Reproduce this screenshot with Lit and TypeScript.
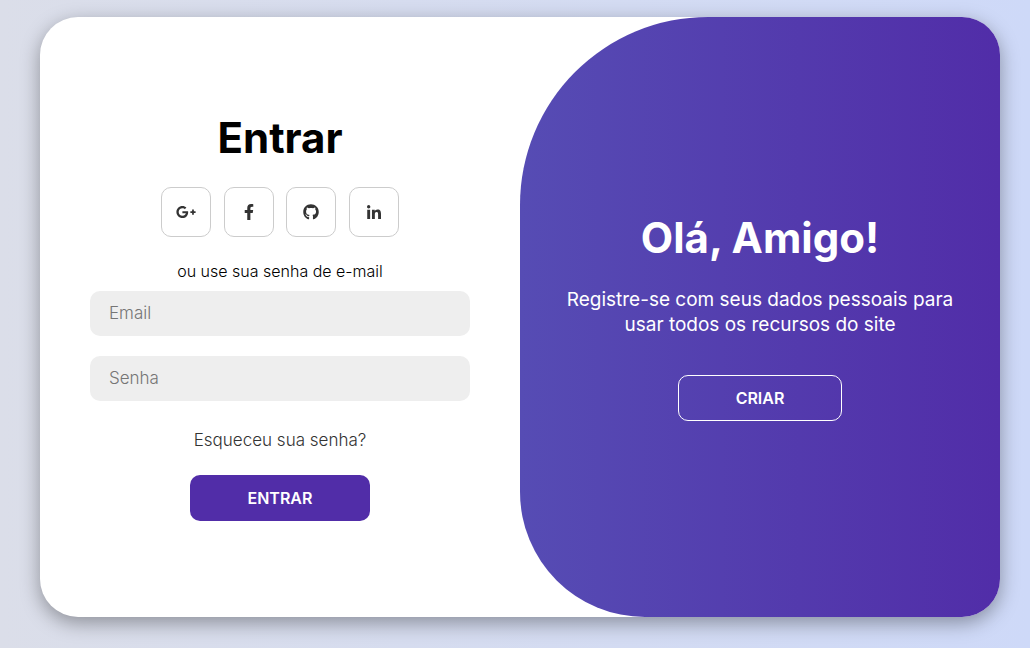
import { LitElement, html, css, svg } from "lit";
import { customElement } from "lit/decorators.js";

const networks = [
  {
    name: "Google Plus",
    box: "0 0 640 512",
    width: 20,
    path: "M386.061 228.496c1.834 9.692 3.143 19.384 3.143 31.956C389.204 370.205 315.599 448 204.8 448c-106.084 0-192-85.915-192-192s85.916-192 192-192c51.864 0 95.083 18.859 128.611 50.292l-52.126 50.03c-14.145-13.621-39.028-29.599-76.485-29.599-65.484 0-118.92 54.221-118.92 121.277 0 67.056 53.436 121.277 118.92 121.277 75.961 0 104.513-54.745 108.965-82.773H204.8v-66.009h181.261zm185.406 6.437V179.2h-56.001v55.733h-55.733v56.001h55.733v55.733h56.001v-55.733H627.2v-56.001h-55.733z",
  },
  {
    name: "Facebook",
    box: "0 0 320 512",
    width: 10,
    path: "M279.14 288l14.22-92.66h-88.91v-60.13c0-25.35 12.42-50.06 52.24-50.06h40.42V6.26S260.43 0 225.36 0c-73.22 0-121.08 44.38-121.08 124.72v70.62H22.89V288h81.39v224h100.17V288z",
  },
  {
    name: "GitHub",
    box: "0 0 496 512",
    width: 16,
    path: "M244.8 8C106.1 8 0 113.3 0 252c0 110.9 69.8 205.8 169.5 239.2 12.8 2.3 17.3-5.6 17.3-12.1 0-6.2-.3-40.4-.3-61.4 0 0-70 15-84.7-29.8 0 0-11.4-29.1-27.8-36.6 0 0-22.9-15.7 1.6-15.4 0 0 24.9 2 38.6 25.8 21.9 38.6 58.6 27.5 72.9 20.9 2.3-16 8.8-27.1 16-33.7-55.9-6.2-112.3-14.3-112.3-110.5 0-27.5 7.6-41.3 23.6-58.9-2.6-6.5-11.1-33.3 2.6-67.9 20.9-6.5 69 27 69 27 20-5.6 41.5-8.5 62.8-8.5s42.8 2.9 62.8 8.5c0 0 48.1-33.6 69-27 13.7 34.7 5.2 61.4 2.6 67.9 16 17.7 25.8 31.5 25.8 58.9 0 96.5-58.9 104.2-114.8 110.5 9.2 7.9 17 22.9 17 46.4 0 33.7-.3 75.4-.3 83.6 0 6.5 4.6 14.4 17.3 12.1C428.2 457.8 496 362.9 496 252 496 113.3 383.5 8 244.8 8z",
  },
  {
    name: "LinkedIn",
    box: "0 -32 448 512",
    width: 14,
    path: "M100.28 448H7.4V148.9h92.88zM53.79 108.1C24.09 108.1 0 83.5 0 53.8a53.79 53.79 0 0 1 107.58 0c0 29.7-24.1 54.3-53.79 54.3zM447.9 448h-92.68V302.4c0-34.7-.7-79.2-48.29-79.2-48.29 0-55.69 37.7-55.69 76.7V448h-92.78V148.9h89.08v40.8h1.3c12.4-23.5 42.69-48.3 87.88-48.3 94 0 111.28 61.9 111.28 142.3V448z",
  },
];

@customElement("app-root")
export class AppRoot extends LitElement {
  static styles = css`
    :host {
      display: flex;
      box-sizing: border-box;
      min-height: 100vh;
      padding: 17px 30px 31px 40px;
      background: linear-gradient(to right, #dbdee9, #ced9f8);
      font-family: Inter, "Open Sans", sans-serif;
      color: #000;
    }
    .card {
      flex: 1;
      display: grid;
      grid-template-columns: 1fr 1fr;
      border-radius: 38px;
      overflow: hidden;
      background: #fff;
      box-shadow: 0 6px 19px rgba(0, 0, 0, 0.35);
    }
    .form,
    .welcome {
      display: flex;
      flex-direction: column;
      align-items: center;
      justify-content: center;
      text-align: center;
      padding: 0 50px;
    }
    .welcome {
      padding: 0 38px;
      border-radius: 188px 0 0 125px;
      background: linear-gradient(to right, #564cb4, #512da8);
      color: #fff;
    }
    .title {
      margin: 0;
      font-size: 42px;
      line-height: 48px;
      font-weight: 700;
    }
    .socials {
      display: flex;
      justify-content: space-between;
      width: 238px;
      margin: 25px 0;
    }
    .social {
      display: flex;
      align-items: center;
      justify-content: center;
      box-sizing: border-box;
      width: 50px;
      height: 50px;
      border: 1px solid #ccc;
      border-radius: 10px;
      color: #333;
    }
    .icon {
      height: 16px;
      fill: currentColor;
    }
    .hint {
      font-size: 16px;
      line-height: 19px;
      font-weight: 300;
      margin-bottom: 10px;
    }
    .field {
      box-sizing: border-box;
      width: 100%;
      height: 45px;
      margin: 0 0 20px;
      padding: 0 19px;
      border: 0;
      border-radius: 10px;
      outline: none;
      background: #eee;
      font: 300 17px Inter, "Open Sans", sans-serif;
    }
    .field::placeholder {
      color: #757575;
    }
    .forgot {
      margin: 9px 0 25px;
      font-size: 17px;
      line-height: 20px;
      font-weight: 300;
      color: #333;
      text-decoration: none;
    }
    .action {
      height: 46px;
      padding: 0 57px;
      border: 1px solid transparent;
      border-radius: 10px;
      background: #512da8;
      color: #fff;
      font: 600 16px Inter, "Open Sans", sans-serif;
      cursor: pointer;
    }
    .outline {
      border-color: #fff;
      background: transparent;
    }
    .text {
      margin: 25px 0 38px;
      font-size: 19px;
      line-height: 25px;
    }
  `;

  render() {
    return html`
      <main class="card">
        <form class="form" @submit=${(e: Event) => e.preventDefault()}>
          <h1 class="title">Entrar</h1>
          <div class="socials">
            ${networks.map(
              (n) => html`<a class="social" href="#" aria-label=${n.name}>
                <svg class="icon" viewBox=${n.box} width=${n.width} aria-hidden="true">
                  ${svg`<path d=${n.path}></path>`}
                </svg>
              </a>`
            )}
          </div>
          <span class="hint">ou use sua senha de e-mail</span>
          <input class="field" type="email" placeholder="Email" aria-label="Email" />
          <input class="field" type="password" placeholder="Senha" aria-label="Senha" />
          <a class="forgot" href="#">Esqueceu sua senha?</a>
          <button class="action" type="submit">ENTRAR</button>
        </form>
        <section class="welcome">
          <h2 class="title">Olá, Amigo!</h2>
          <p class="text">Registre-se com seus dados pessoais para usar todos os recursos do site</p>
          <button class="action outline" type="button">CRIAR</button>
        </section>
      </main>
    `;
  }
}
